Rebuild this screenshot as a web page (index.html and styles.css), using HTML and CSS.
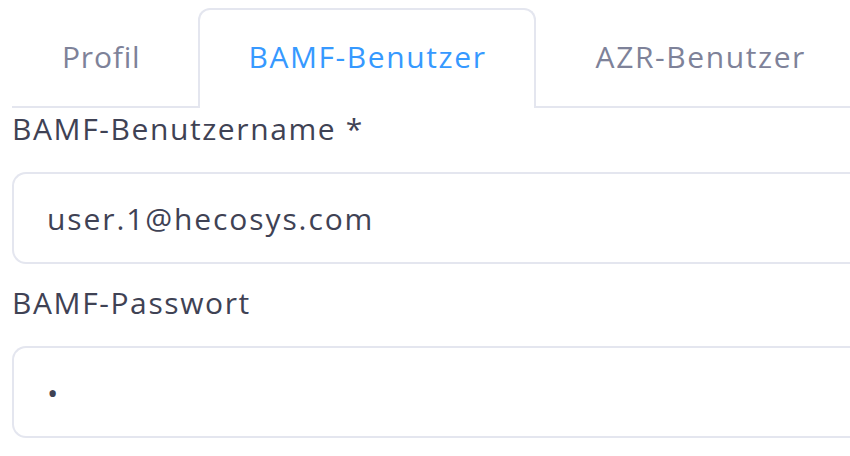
FILE: index.html
```html
<!DOCTYPE html>
<html lang="de">
<head>
    <meta charset="UTF-8">
    <meta name="viewport" content="width=device-width, initial-scale=1.0">
    <title>Benutzerkonten</title>
    <link rel="stylesheet" href="styles.css">
</head>
<body>
    <ul class="tabs">
        <li class="tab tab-short">Profil</li>
        <li class="tab active">BAMF-Benutzer</li>
        <li class="tab">AZR-Benutzer</li>
    </ul>

    <form class="account-form">
        <div class="form-group">
            <label class="form-label" for="bamf-user">BAMF-Benutzername *</label>
            <input class="form-control" id="bamf-user" type="text" value="user.1@hecosys.com">
        </div>
        <div class="form-group">
            <label class="form-label" for="bamf-pass">BAMF-Passwort</label>
            <input class="form-control" id="bamf-pass" type="password" value="x">
        </div>
    </form>
</body>
</html>
```

FILE: styles.css
```css
body {
    margin: 0;
    padding: 8px 0 0 12px;
    overflow: hidden;
    background-color: #fff;
    font-family: 'Open Sans', 'Liberation Sans', sans-serif;
    font-size: 30px;
    letter-spacing: 1.6px;
    color: #3f4254;
}
.tabs {
    display: flex;
    margin: 0;
    padding: 0;
    list-style: none;
    border-bottom: 2px solid #e4e6ef;
}
.tab {
    display: flex;
    align-items: center;
    box-sizing: border-box;
    height: 100px;
    padding: 0 47px 6px 48px;
    margin: 0 10px -2px 0;
    border: 2px solid transparent;
    border-bottom: 0;
    border-radius: 12px 12px 0 0;
    color: #7e8299;
    white-space: nowrap;
}
.tab-short {
    padding-right: 46px;
    letter-spacing: 0.8px;
}
.tab.active {
    border-color: #e4e6ef;
    background-color: #fff;
    color: #3699ff;
}
.account-form {
    margin: 0;
}
.form-group {
    margin-bottom: 18px;
}
.form-label {
    display: block;
    line-height: 42px;
    margin-bottom: 22px;
}
.form-control {
    display: block;
    box-sizing: border-box;
    width: 100%;
    height: 92px;
    margin: 0;
    padding: 0 33px;
    border: 2px solid #e4e6ef;
    border-right: 0;
    border-radius: 14px 0 0 14px;
    background-color: #fff;
    font-family: inherit;
    font-size: 30px;
    letter-spacing: 1.9px;
    color: #3f4254;
    outline: none;
}
```
